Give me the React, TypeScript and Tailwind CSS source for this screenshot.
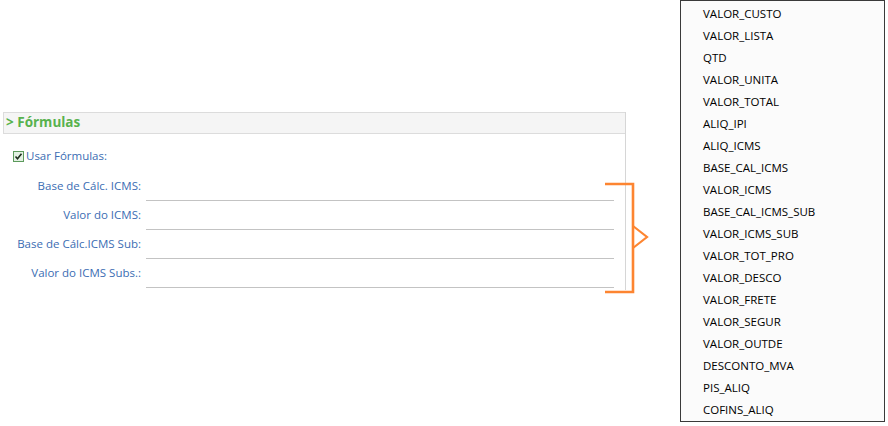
const campos = [
  "VALOR_CUSTO",
  "VALOR_LISTA",
  "QTD",
  "VALOR_UNITA",
  "VALOR_TOTAL",
  "ALIQ_IPI",
  "ALIQ_ICMS",
  "BASE_CAL_ICMS",
  "VALOR_ICMS",
  "BASE_CAL_ICMS_SUB",
  "VALOR_ICMS_SUB",
  "VALOR_TOT_PRO",
  "VALOR_DESCO",
  "VALOR_FRETE",
  "VALOR_SEGUR",
  "VALOR_OUTDE",
  "DESCONTO_MVA",
  "PIS_ALIQ",
  "COFINS_ALIQ",
]

const linhas = [
  "Base de Cálc. ICMS:",
  "Valor do ICMS:",
  "Base de Cálc.ICMS Sub:",
  "Valor do ICMS Subs.:",
]

function Checkbox() {
  return (
    <svg width="11" height="11" viewBox="0 0 11 11" className="shrink-0">
      <rect x="0.5" y="0.5" width="10" height="10" fill="#e3f1e3" stroke="#5c9a5c" />
      <path d="M2.5 5.5 L4.5 7.8 L8.5 2.8" fill="none" stroke="#1e2e1e" strokeWidth="1.6" />
    </svg>
  )
}

function Bracket() {
  return (
    <svg
      width="48"
      height="112"
      viewBox="0 0 48 112"
      className="absolute left-[604px] top-[182px]"
    >
      <path
        d="M1 2 H29 V110 H1"
        fill="none"
        stroke="#fd8531"
        strokeWidth="2.6"
      />
      <path
        d="M29 44 L43 55 L29 66"
        fill="none"
        stroke="#fd8531"
        strokeWidth="2.2"
      />
    </svg>
  )
}

export default function App() {
  return (
    <div
      className="relative w-[888px] h-[426px] bg-white overflow-hidden"
      style={{ fontFamily: '"Open Sans", "Noto Sans", sans-serif' }}
    >
      <div className="pt-[112px] pl-[3px]">
        <div className="w-[623px] h-[178px] border-r border-[#d6d6d6]">
          <div className="h-[22px] border-y border-l border-[#dcdcdc] bg-[#f5f5f5] flex items-center pl-[2px]">
            <span className="text-[13.5px] font-bold text-[#58b24e] leading-none">&gt; Fórmulas</span>
          </div>
          <div className="mt-[15px] ml-[10px] flex items-center gap-[2px] h-[14px]">
            <Checkbox />
            <span className="text-[11.5px] text-[#3b6db3] leading-none">Usar Fórmulas:</span>
          </div>
          <div className="mt-[9px] flex flex-col">
            {linhas.map((l) => (
              <div key={l} className="flex h-[29px]">
                <div className="w-[138px] flex items-center justify-end pb-[1px]">
                  <span className="text-[11.5px] text-[#3b6db3] leading-none whitespace-nowrap">{l}</span>
                </div>
                <div className="ml-[5px] w-[468px] border-b border-[#c3c3c3]" />
              </div>
            ))}
          </div>
        </div>
      </div>

      <Bracket />

      <div className="absolute left-[680px] top-0 w-[205px] h-[422px] border border-[#3a3a3a] bg-[#fbfbfb] pt-[2px]">
        {campos.map((c) => (
          <div
            key={c}
            className="h-[22px] pl-[22px] flex items-center text-[11.5px] text-black leading-none"
          >
            {c}
          </div>
        ))}
      </div>
    </div>
  )
}
